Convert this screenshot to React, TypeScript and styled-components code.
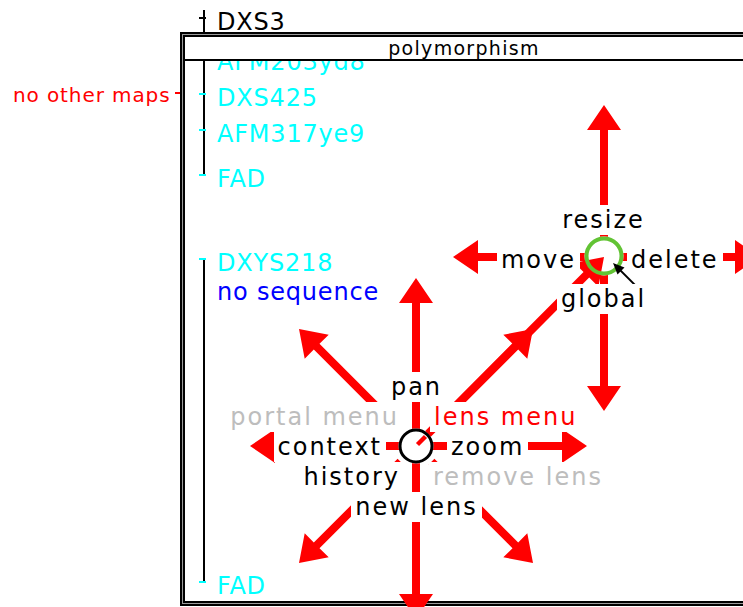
import React from "react";
import styled, { createGlobalStyle } from "styled-components";

const FONT = `"DejaVu Sans", "Liberation Sans", sans-serif`;
const CYAN = "#00ffff";
const RED = "#ff0000";

const GlobalStyle = createGlobalStyle`
  html, body { margin: 0; padding: 0; background: #fff; overflow: hidden; }
  body { font-family: ${FONT}; }
`;

const Desk = styled.div`
  position: relative;
  width: 743px;
  height: 607px;
  overflow: hidden;
  background: #fff;
  font-family: ${FONT};
`;

/* ---------- genetic map (markers on a rail) ---------- */

const Rail = styled.ul<{ $offset: number; $lineTop: number; $lineBottom: number }>`
  position: relative;
  list-style: none;
  margin: ${(p) => p.$offset}px 0 0;
  padding: 0;
  display: flex;
  flex-direction: column;
  &::before {
    content: "";
    position: absolute;
    left: 18px;
    width: 2px;
    top: ${(p) => p.$lineTop}px;
    bottom: ${(p) => p.$lineBottom}px;
    background: #000;
  }
`;

const BackdropRail = styled(Rail)`
  position: absolute;
  left: 185px;
  top: 8px;
`;

const MarkerRow = styled.li<{ $space: number }>`
  display: flex;
  align-items: flex-start;
  gap: 11px;
  height: 28px;
  padding-left: 14px;
  margin-top: ${(p) => p.$space}px;
`;

const MarkerTick = styled.span<{ $color: string }>`
  position: relative;
  z-index: 1;
  flex: none;
  width: 7px;
  height: 2px;
  margin-top: 9px;
  background: ${(p) => p.$color};
`;

const MarkerName = styled.span<{ $color: string }>`
  font-size: 24px;
  line-height: 28px;
  letter-spacing: 0.8px;
  color: ${(p) => p.$color};
  white-space: nowrap;
`;

const Note = styled.div`
  position: absolute;
  left: 13px;
  top: 83px;
  display: flex;
  align-items: flex-start;
  gap: 5px;
  font-size: 20px;
  line-height: 24px;
  letter-spacing: 0.9px;
  color: ${RED};
  white-space: nowrap;
`;

const NoteDash = styled.span`
  flex: none;
  width: 5px;
  height: 2px;
  margin-top: 9px;
  background: ${RED};
`;

/* ---------- lens window ---------- */

const Window = styled.section`
  position: absolute;
  left: 180px;
  top: 32px;
  width: 568px;
  height: 574px;
  box-sizing: border-box;
  border: 2px solid #000;
  padding: 1px;
  background: #9a9a9a;
  display: flex;
`;

const WindowInner = styled.div`
  flex: 1;
  display: flex;
  flex-direction: column;
  border: 2px solid #000;
  background: #fff;
  overflow: hidden;
`;

const TitleBar = styled.header`
  flex: none;
  height: 22px;
  display: flex;
  align-items: center;
  justify-content: center;
  border-bottom: 2px solid #000;
  font-size: 19px;
  letter-spacing: 1.3px;
  color: #000;
`;

const WindowBody = styled.div`
  flex: 1;
  display: flex;
  flex-direction: column;
  overflow: hidden;
`;

/* ---------- marking menus ---------- */

const MenuLayer = styled.svg`
  position: absolute;
  left: 0;
  top: 0;
  pointer-events: none;
`;

const Menu = styled.div<{ $cx: number; $top: number; $rowGap: number }>`
  position: absolute;
  left: ${(p) => p.$cx - 200}px;
  top: ${(p) => p.$top}px;
  width: 400px;
  display: flex;
  flex-direction: column;
  gap: ${(p) => p.$rowGap}px;
`;

const MenuRow = styled.div<{ $gap: number }>`
  display: grid;
  grid-template-columns: 1fr ${(p) => p.$gap}px 1fr;
  height: 30px;
`;

type Tone = "ink" | "hot" | "dim";
type Side = "start" | "end" | "center";
const toneColor: Record<Tone, string> = { ink: "#000", hot: RED, dim: "#bdbdbd" };

const MenuItem = styled.span<{ $tone?: Tone; $side: Side }>`
  grid-column: ${(p) => (p.$side === "start" ? "3" : p.$side === "end" ? "1" : "1 / -1")};
  justify-self: ${(p) => p.$side};
  padding: 0 4px;
  background: #fff;
  font-size: 24px;
  line-height: 30px;
  letter-spacing: 2px;
  color: ${(p) => toneColor[p.$tone ?? "ink"]};
  white-space: nowrap;
`;

/* ---------- arrow drawing ---------- */

function arrow(cx: number, cy: number, x1: number, y1: number, r0 = 0, shaft = 8, headW = 34, headL = 25) {
  const dx = x1 - cx;
  const dy = y1 - cy;
  const len = Math.hypot(dx, dy);
  const ux = dx / len;
  const uy = dy / len;
  const x0 = cx + ux * r0;
  const y0 = cy + uy * r0;
  const px = -uy;
  const py = ux;
  const bx = x1 - ux * headL;
  const by = y1 - uy * headL;
  const s = shaft / 2;
  const h = headW / 2;
  const pts = [
    [x0 + px * s, y0 + py * s],
    [bx + px * s, by + py * s],
    [bx + px * h, by + py * h],
    [x1, y1],
    [bx - px * h, by - py * h],
    [bx - px * s, by - py * s],
    [x0 - px * s, y0 - py * s],
  ];
  return pts.map((p) => `${p[0].toFixed(1)},${p[1].toFixed(1)}`).join(" ");
}

const LENS = { x: 416, y: 446 };
const GLOBAL = { x: 604, y: 257 };

const lensTips: [number, number, number][] = [
  [416, 278, 0],
  [416, 619, 0],
  [250, 446, 0],
  [587, 446, 0],
  [299, 329, 24],
  [533, 329, 24],
  [299, 563, 22],
  [533, 563, 22],
];

const globalTips: [number, number][] = [
  [604, 105],
  [604, 411],
  [453, 257],
  [760, 257],
];

function Menus() {
  const u = { x: GLOBAL.x - LENS.x, y: GLOBAL.y - LENS.y };
  const ul = Math.hypot(u.x, u.y);
  const sx = LENS.x + (u.x / ul) * 17;
  const sy = LENS.y + (u.y / ul) * 17;
  return (
    <MenuLayer width={743} height={607} viewBox="0 0 743 607">
      {lensTips.map(([x, y, r0], i) => (
        <polygon key={`l${i}`} points={arrow(LENS.x, LENS.y, x, y, r0)} fill={RED} />
      ))}
      {globalTips.map(([x, y], i) => (
        <polygon key={`g${i}`} points={arrow(GLOBAL.x, GLOBAL.y, x, y)} fill={RED} />
      ))}
      <circle cx={LENS.x} cy={LENS.y} r={17.5} fill="#fff" />
      <circle cx={GLOBAL.x} cy={GLOBAL.y - 1} r={19.5} fill="#fff" />
      <polygon points={arrow(sx, sy, GLOBAL.x, GLOBAL.y)} fill={RED} />
      <line x1={417.5} y1={444.5} x2={425.5} y2={436.5} stroke={RED} strokeWidth={4.5} />
      <circle cx={LENS.x} cy={LENS.y} r={16} fill="none" stroke="#000" strokeWidth={3} />
      <circle cx={GLOBAL.x} cy={GLOBAL.y - 1} r={17.5} fill="none" stroke="#62c334" strokeWidth={4} />
      <line x1={636} y1={286} x2={619} y2={269} stroke="#000" strokeWidth={1.8} />
      <polygon points="613,263 624.5,267.5 617.5,274.5" fill="#000" />
    </MenuLayer>
  );
}

export default function App() {
  return (
    <>
      <GlobalStyle />
      <Desk>
        <BackdropRail $offset={0} $lineTop={2} $lineBottom={0}>
          <MarkerRow $space={0}>
            <MarkerTick $color="#000" />
            <MarkerName $color="#000">DXS3</MarkerName>
          </MarkerRow>
        </BackdropRail>
        <Note>
          <span>no other maps</span>
          <NoteDash />
        </Note>

        <Window>
          <WindowInner>
            <TitleBar>polymorphism</TitleBar>
            <WindowBody>
              <Rail $offset={-13} $lineTop={0} $lineBottom={17}>
                <MarkerRow $space={0}>
                  <MarkerTick $color={CYAN} />
                  <MarkerName $color={CYAN}>AFM203yd8</MarkerName>
                </MarkerRow>
                <MarkerRow $space={8}>
                  <MarkerTick $color={CYAN} />
                  <MarkerName $color={CYAN}>DXS425</MarkerName>
                </MarkerRow>
                <MarkerRow $space={8}>
                  <MarkerTick $color={CYAN} />
                  <MarkerName $color={CYAN}>AFM317ye9</MarkerName>
                </MarkerRow>
                <MarkerRow $space={17}>
                  <MarkerTick $color={CYAN} />
                  <MarkerName $color={CYAN}>FAD</MarkerName>
                </MarkerRow>
              </Rail>
              <Rail $offset={56} $lineTop={10} $lineBottom={17}>
                <MarkerRow $space={0}>
                  <MarkerTick $color={CYAN} />
                  <MarkerName $color={CYAN}>DXYS218</MarkerName>
                </MarkerRow>
                <MarkerRow $space={1}>
                  <MarkerTick $color="transparent" />
                  <MarkerName $color="#0000ff">no sequence</MarkerName>
                </MarkerRow>
                <MarkerRow $space={266}>
                  <MarkerTick $color={CYAN} />
                  <MarkerName $color={CYAN}>FAD</MarkerName>
                </MarkerRow>
              </Rail>
            </WindowBody>
          </WindowInner>
        </Window>

        <Menus />

        <Menu $cx={603.5} $top={205} $rowGap={9.5}>
          <MenuRow $gap={0}>
            <MenuItem $side="center">resize</MenuItem>
          </MenuRow>
          <MenuRow $gap={47}>
            <MenuItem $side="end">move</MenuItem>
            <MenuItem $side="start">delete</MenuItem>
          </MenuRow>
          <MenuRow $gap={0}>
            <MenuItem $side="center">global</MenuItem>
          </MenuRow>
        </Menu>

        <Menu $cx={416.5} $top={372} $rowGap={0}>
          <MenuRow $gap={0}>
            <MenuItem $side="center">pan</MenuItem>
          </MenuRow>
          <MenuRow $gap={27}>
            <MenuItem $side="end" $tone="dim">portal menu</MenuItem>
            <MenuItem $side="start" $tone="hot">lens menu</MenuItem>
          </MenuRow>
          <MenuRow $gap={61}>
            <MenuItem $side="end">context</MenuItem>
            <MenuItem $side="start">zoom</MenuItem>
          </MenuRow>
          <MenuRow $gap={25}>
            <MenuItem $side="end">history</MenuItem>
            <MenuItem $side="start" $tone="dim">remove lens</MenuItem>
          </MenuRow>
          <MenuRow $gap={0}>
            <MenuItem $side="center">new lens</MenuItem>
          </MenuRow>
        </Menu>
      </Desk>
    </>
  );
}
